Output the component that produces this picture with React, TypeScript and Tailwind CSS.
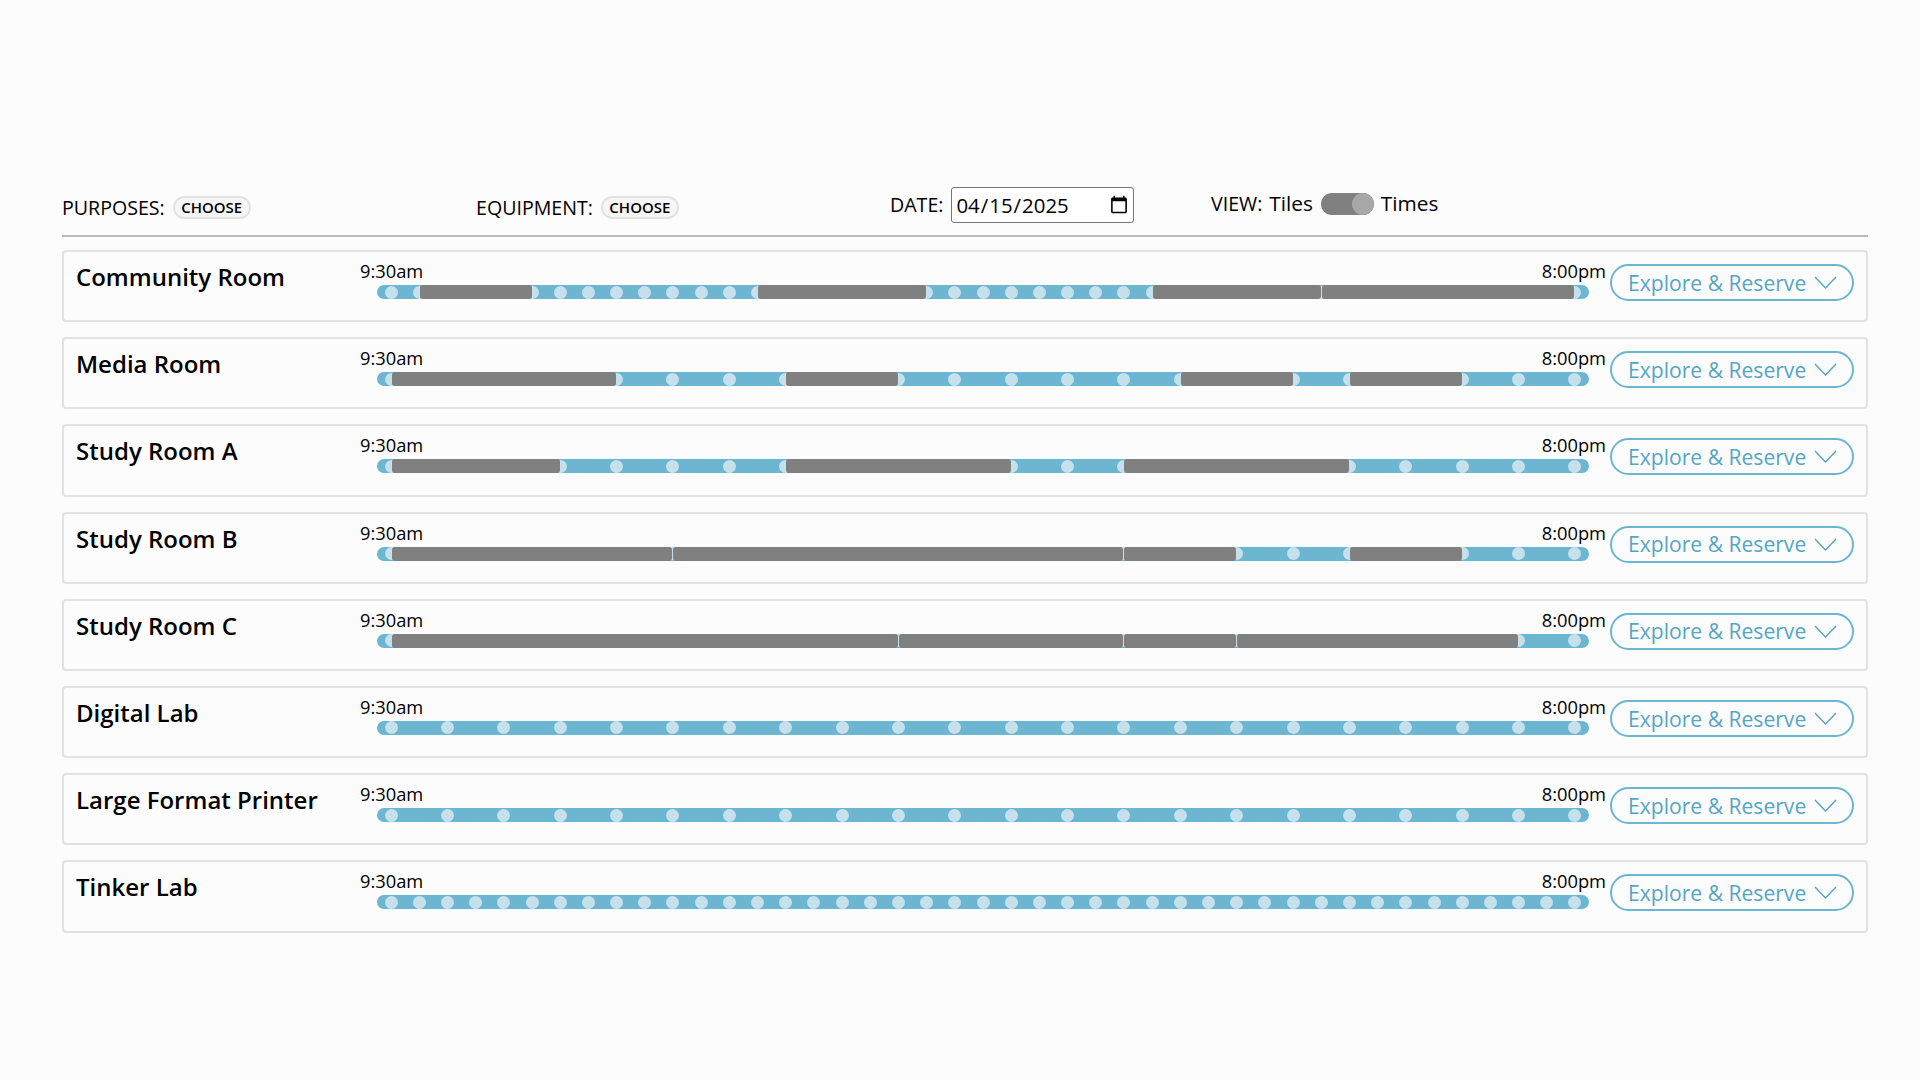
type Seg = [number, number];

const ROOMS: { name: string; step: number; busy: Seg[] }[] = [
  { name: "Community Room", step: 1, busy: [[1, 5], [13, 19], [27, 33], [33, 42]] },
  { name: "Media Room", step: 2, busy: [[0, 8], [14, 18], [28, 32], [34, 38]] },
  { name: "Study Room A", step: 2, busy: [[0, 6], [14, 22], [26, 34]] },
  { name: "Study Room B", step: 2, busy: [[0, 10], [10, 26], [26, 30], [34, 38]] },
  { name: "Study Room C", step: 2, busy: [[0, 18], [18, 26], [26, 30], [30, 40]] },
  { name: "Digital Lab", step: 2, busy: [] },
  { name: "Large Format Printer", step: 2, busy: [] },
  { name: "Tinker Lab", step: 1, busy: [] },
];

const SLOTS = 43;

function ChooseButton() {
  return (
    <button className="h-[23px] w-[78px] rounded-full border-2 border-[#e2e2e2] bg-[#f6f6f6] text-[15px] font-semibold leading-none text-black">
      CHOOSE
    </button>
  );
}

function TimeBar({ step, busy }: { step: number; busy: Seg[] }) {
  const slots = Array.from({ length: SLOTS }, (_, i) => i);
  return (
    <div className="relative mx-[17px] mt-[2px] flex h-[14px] rounded-full bg-[#6cb6d2]">
      {slots.map((i) => (
        <div key={i} className="flex flex-1 items-center justify-center">
          {i % step === 0 && <span className="h-[13px] w-[13px] shrink-0 rounded-full bg-[#c6e0ec]" />}
        </div>
      ))}
      {busy.map(([from, to]) => (
        <div
          key={from}
          className="absolute top-0 h-[14px] rounded-[3px] bg-[#808080]"
          style={{
            left: `calc(${((from + 0.5) / SLOTS) * 100}% + 0.5px)`,
            width: `calc(${((to - from) / SLOTS) * 100}% - 1px)`,
          }}
        />
      ))}
    </div>
  );
}

export default function App() {
  return (
    <div className="min-h-screen bg-[#fcfcfc] pl-[62px] pr-[52px] pt-[187px] pb-[118px] font-['Open_Sans',sans-serif] text-black">
      {/* Filter row */}
      <div className="flex h-[50px] items-start border-b-2 border-[#b9b9b9] text-[19.6px]">
        <div className="flex h-[41px] w-[414px] items-center gap-[8px]">
          <span>PURPOSES:</span>
          <ChooseButton />
        </div>
        <div className="flex h-[41px] w-[414px] items-center gap-[8px]">
          <span>EQUIPMENT:</span>
          <ChooseButton />
        </div>
        <div className="flex h-[36px] w-[321px] items-center gap-[8px]">
          <span>DATE:</span>
          <input
            type="date"
            defaultValue="2025-04-15"
            className="h-[36px] w-[183px] rounded-[3px] border-[1.5px] border-[#767676] bg-white pl-[3px] pr-[2px] text-[20.4px] text-black"
          />
        </div>
        <div className="flex h-[34px] items-center text-[20.8px]">
          <span className="text-[19.6px]">VIEW:</span>
          <span className="ml-[7px]">Tiles</span>
          <div className="ml-[8px] flex h-[22px] w-[53px] justify-end rounded-full bg-[#808080]">
            <span className="h-[22px] w-[22px] rounded-full bg-[#a8a8a8]" />
          </div>
          <span className="ml-[7px]">Times</span>
        </div>
      </div>

      {/* Room list */}
      <div className="mt-[13px] flex flex-col gap-[15px]">
        {ROOMS.map((room) => (
          <div
            key={room.name}
            className="flex h-[72.2px] items-start rounded-[4px] border-2 border-[#e2e2e2] pl-[12px] pr-[12px]"
          >
            <div className="w-[284px] shrink-0 pt-[7px] text-[24px] font-semibold leading-[36px]">{room.name}</div>
            <div className="flex-1 pt-[6px]">
              <div className="flex justify-between text-[18.3px] leading-[25px]">
                <span>9:30am</span>
                <span>8:00pm</span>
              </div>
              <TimeBar step={room.step} busy={room.busy} />
            </div>
            <button className="ml-[4px] mt-[12px] flex h-[37px] w-[244px] shrink-0 items-center justify-between rounded-full border-2 border-[#6cb6d2] pl-[16px] pr-[15px] text-[21.1px] text-[#55a6c4]">
              <span>Explore &amp; Reserve</span>
              <svg width="23" height="13" viewBox="0 0 23 13" fill="none" className="shrink-0">
                <polyline points="1,1 11.5,12 22,1" stroke="#55a6c4" strokeWidth="1.4" />
              </svg>
            </button>
          </div>
        ))}
      </div>
    </div>
  );
}
